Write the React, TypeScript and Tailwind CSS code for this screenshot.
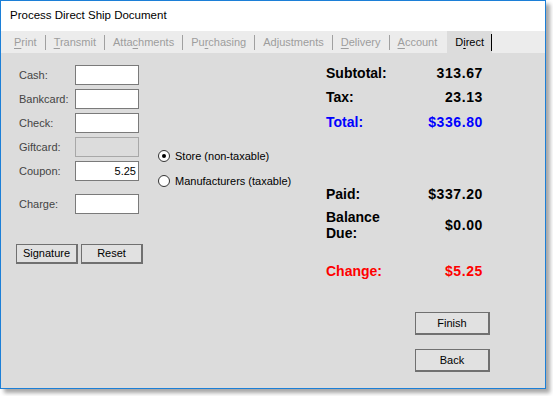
import React from "react";

const font = { fontFamily: '"Liberation Sans", Arial, sans-serif' };

function Tab({ pre, u, post, last }: { pre: string; u: string; post: string; last?: boolean }) {
  return (
    <div className="flex items-center h-full">
      <span className="px-[8px] text-[11px] text-[#9d9d9d] leading-none">
        {pre}
        <span className="underline underline-offset-2">{u}</span>
        {post}
      </span>
      {!last && <div className="w-px h-[15px] bg-[#a0a0a0]" />}
    </div>
  );
}

function Field({ label, value, disabled, className }: { label: string; value?: string; disabled?: boolean; className?: string }) {
  return (
    <div className={"flex items-center h-[20px] " + (className || "")}>
      <div className="w-[59px] pl-[3px] text-[11px] text-[#444] leading-none">{label}</div>
      <div
        className={
          "w-[64px] h-[20px] border flex items-center justify-end pr-[2px] text-[11px] text-black " +
          (disabled ? "bg-[#dcdcdc] border-[#a8a8a8]" : "bg-white border-[#7a7a7a]")
        }
      >
        {value}
      </div>
    </div>
  );
}

function Btn({ label, className }: { label: string; className?: string }) {
  return (
    <div
      className={
        "flex items-center justify-center bg-[#e1e1e1] border border-[#707070] border-r-2 border-b-2 text-[11px] text-black " +
        (className || "")
      }
    >
      {label}
    </div>
  );
}

function Radio({ checked, label }: { checked?: boolean; label: string }) {
  return (
    <div className="flex items-center h-[16px]">
      <div className="w-[12px] h-[12px] rounded-full border border-[#333] bg-white flex items-center justify-center">
        {checked && <div className="w-[4px] h-[4px] rounded-full bg-black" />}
      </div>
      <span className="ml-[5px] text-[11px] text-black leading-none">{label}</span>
    </div>
  );
}

function Row({ label, value, color, className }: { label: React.ReactNode; value: string; color: string; className?: string }) {
  return (
    <div className={"flex items-center justify-between font-bold text-[14px] leading-[16px] " + (className || "")} style={{ color }}>
      <div>{label}</div>
      <div className="tracking-[0.6px]">{value}</div>
    </div>
  );
}

export default function App() {
  return (
    <div className="w-[553px] h-[396px] bg-white" style={font}>
      <div className="w-[546px] h-[389px] border border-[#1c7fd7] flex flex-col shadow-[4px_4px_4px_rgba(0,0,0,0.35)]">
        <div className="h-[30px] bg-white flex items-center pl-[9px] text-[11.5px] text-black">
          Process Direct Ship Document
        </div>
        <div className="h-[22px] bg-[#ececec] flex items-stretch pl-[5px]">
          <Tab pre="" u="P" post="rint" />
          <Tab pre="" u="T" post="ransmit" />
          <Tab pre="Atta" u="c" post="hments" />
          <Tab pre="Pu" u="r" post="chasing" />
          <Tab pre="Ad" u="j" post="ustments" />
          <Tab pre="" u="D" post="elivery" />
          <Tab pre="" u="A" post="ccount" last />
          <div className="ml-[2px] flex items-center h-full bg-[#dcdcdc]">
            <span className="pl-[8px] pr-[7px] text-[11px] text-black leading-none">
              D<span className="underline underline-offset-2">i</span>rect
            </span>
            <div className="w-px h-[17px] bg-black" />
          </div>
        </div>
        <div className="flex-1 bg-[#dcdcdc] flex">
          <div className="pl-[15px] pt-[12px] w-[142px]">
            <Field label="Cash:" />
            <Field label="Bankcard:" className="mt-[4px]" />
            <Field label="Check:" className="mt-[4px]" />
            <Field label="Giftcard:" disabled className="mt-[4px]" />
            <Field label="Coupon:" value="5.25" className="mt-[4px]" />
            <Field label="Charge:" className="mt-[13px]" />
            <div className="flex mt-[30px] gap-[3px]">
              <Btn label="Signature" className="w-[62px] h-[20px]" />
              <Btn label="Reset" className="w-[62px] h-[20px]" />
            </div>
          </div>
          <div className="pl-[15px] pt-[95px] flex flex-col gap-[9px]">
            <Radio checked label="Store (non-taxable)" />
            <Radio label="Manufacturers (taxable)" />
          </div>
          <div className="ml-auto mr-[62px] w-[157px] flex flex-col pt-[12px] relative">
            <Row label="Subtotal:" value="313.67" color="#000" />
            <Row label="Tax:" value="23.13" color="#000" className="mt-[8px]" />
            <Row label="Total:" value="$336.80" color="#0000ff" className="mt-[9px]" />
            <Row label="Paid:" value="$337.20" color="#000" className="mt-[56px]" />
            <Row
              label={
                <div>
                  Balance
                  <br />
                  Due:
                </div>
              }
              value="$0.00"
              color="#000"
              className="mt-[7px]"
            />
            <Row label="Change:" value="$5.25" color="#ff0000" className="mt-[22px]" />
            <div className="flex flex-col items-end -mr-[7px] mt-[33px] gap-[14px]">
              <Btn label="Finish" className="w-[75px] h-[23px]" />
              <Btn label="Back" className="w-[75px] h-[23px]" />
            </div>
          </div>
        </div>
      </div>
    </div>
  );
}
